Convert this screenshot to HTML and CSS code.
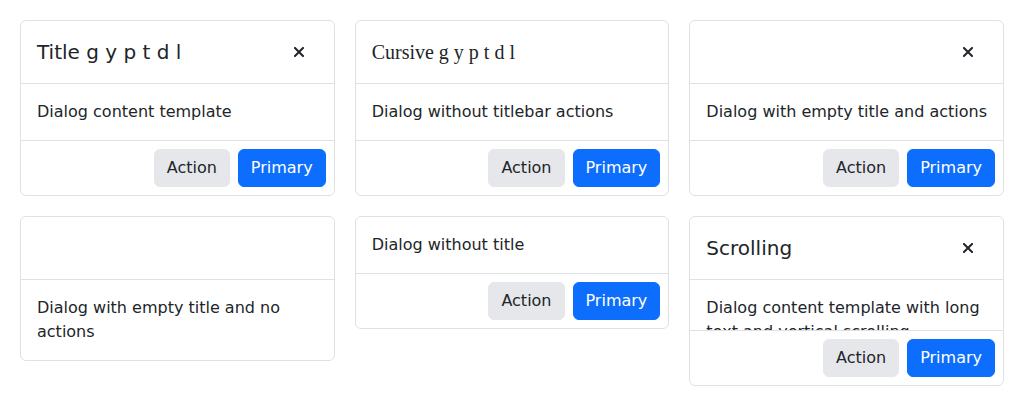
FILE: index.html
```html
<!DOCTYPE html>
<html lang="en">
<head>
<meta charset="utf-8">
<title>Dialogs</title>
<link rel="stylesheet" href="styles.css">
</head>
<body>
<div class="grid">
  <div class="dialog">
    <div class="header">
      <div class="title">Title g y p t d l</div>
      <button class="close" aria-label="Close"><svg width="10" height="10" viewBox="0 0 10 10"><path d="M1 1L9 9M9 1L1 9" stroke="#212529" stroke-width="2" stroke-linecap="square"/></svg></button>
    </div>
    <div class="body">Dialog content template</div>
    <div class="footer"><button class="btn btn-secondary">Action</button><button class="btn btn-primary">Primary</button></div>
  </div>
  <div class="dialog">
    <div class="header">
      <div class="title serif">Cursive g y p t d l</div>
    </div>
    <div class="body">Dialog without titlebar actions</div>
    <div class="footer"><button class="btn btn-secondary">Action</button><button class="btn btn-primary">Primary</button></div>
  </div>
  <div class="dialog">
    <div class="header">
      <div class="title"></div>
      <button class="close" aria-label="Close"><svg width="10" height="10" viewBox="0 0 10 10"><path d="M1 1L9 9M9 1L1 9" stroke="#212529" stroke-width="2" stroke-linecap="square"/></svg></button>
    </div>
    <div class="body">Dialog with empty title and actions</div>
    <div class="footer"><button class="btn btn-secondary">Action</button><button class="btn btn-primary">Primary</button></div>
  </div>
  <div class="dialog">
    <div class="header">
      <div class="title"></div>
    </div>
    <div class="body">Dialog with empty title and no actions</div>
  </div>
  <div class="dialog">
    <div class="body">Dialog without title</div>
    <div class="footer"><button class="btn btn-secondary">Action</button><button class="btn btn-primary">Primary</button></div>
  </div>
  <div class="dialog">
    <div class="header">
      <div class="title">Scrolling</div>
      <button class="close" aria-label="Close"><svg width="10" height="10" viewBox="0 0 10 10"><path d="M1 1L9 9M9 1L1 9" stroke="#212529" stroke-width="2" stroke-linecap="square"/></svg></button>
    </div>
    <div class="body scroll">Dialog content template with long text and vertical scrolling</div>
    <div class="footer"><button class="btn btn-secondary">Action</button><button class="btn btn-primary">Primary</button></div>
  </div>
</div>
</body>
</html>
```
FILE: styles.css
```css
* { box-sizing: border-box; }
html, body { margin: 0; background: #fff; }
body {
  padding: 20px;
  font-family: "DejaVu Sans", sans-serif;
  font-size: 16px;
  line-height: 1.5;
  color: #212529;
}
.grid {
  display: grid;
  grid-template-columns: repeat(3, 1fr);
  gap: 20px;
  align-items: start;
}
.dialog {
  border: 1px solid #dee2e6;
  border-radius: 6px;
  background: #fff;
  display: flex;
  flex-direction: column;
  overflow: hidden;
}
.header {
  display: flex;
  align-items: center;
  padding: 16px;
  border-bottom: 1px solid #dee2e6;
}
.title {
  flex: 1;
  font-size: 20px;
  line-height: 30px;
  min-height: 30px;
}
.title.serif {
  font-family: "Liberation Serif", serif;
}
.close {
  width: 24px;
  height: 24px;
  margin-right: 7px;
  padding: 0;
  border: 0;
  background: transparent;
  display: flex;
  align-items: center;
  justify-content: center;
}
.body {
  padding: 16px;
}
.body.scroll {
  height: 50px;
  overflow: hidden;
}
.footer {
  display: flex;
  justify-content: flex-end;
  gap: 8px;
  padding: 8px;
  border-top: 1px solid #dee2e6;
}
.btn {
  font-family: "DejaVu Sans", sans-serif;
  font-size: 16px;
  line-height: 24px;
  padding: 6px 12px;
  border: 1px solid transparent;
  border-radius: 6px;
}
.btn-secondary {
  background: #e5e7eb;
  border-color: #e5e7eb;
  color: #212529;
}
.btn-primary {
  background: #0d6efd;
  border-color: #0d6efd;
  color: #fff;
}
```
